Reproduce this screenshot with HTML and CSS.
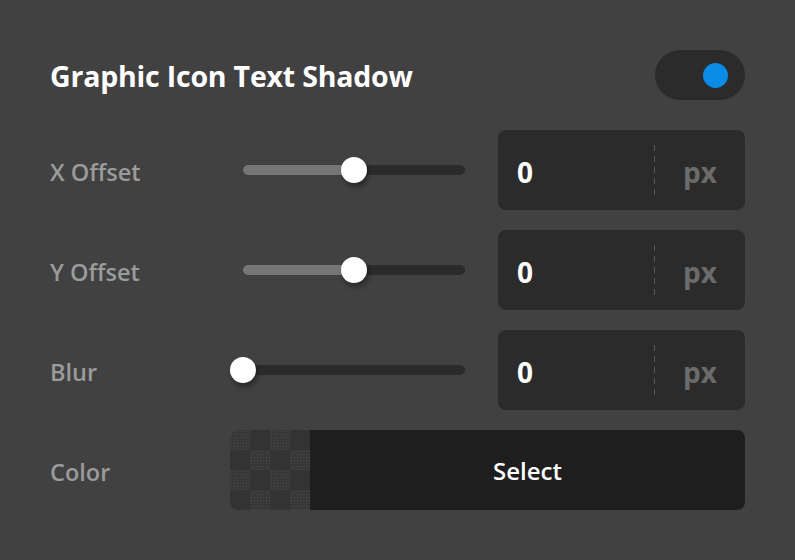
FILE: index.html
```html
<!DOCTYPE html>
<html lang="en">
<head>
<meta charset="utf-8">
<title>Graphic Icon Text Shadow</title>
<link rel="stylesheet" href="styles.css">
</head>
<body>
<div class="panel">
  <div class="header">
    <h1 class="title">Graphic Icon Text Shadow</h1>
    <div class="toggle"><span class="toggle-knob"></span></div>
  </div>

  <div class="row">
    <div class="label">X Offset</div>
    <div class="slider">
      <div class="track"><div class="fill" style="width:50%"></div><span class="knob" style="left:50%"></span></div>
    </div>
    <div class="field"><span class="value">0</span><span class="divider"></span><span class="unit">px</span></div>
  </div>

  <div class="row">
    <div class="label">Y Offset</div>
    <div class="slider">
      <div class="track"><div class="fill" style="width:50%"></div><span class="knob" style="left:50%"></span></div>
    </div>
    <div class="field"><span class="value">0</span><span class="divider"></span><span class="unit">px</span></div>
  </div>

  <div class="row">
    <div class="label">Blur</div>
    <div class="slider">
      <div class="track"><div class="fill" style="width:0%"></div><span class="knob" style="left:0%"></span></div>
    </div>
    <div class="field"><span class="value">0</span><span class="divider"></span><span class="unit">px</span></div>
  </div>

  <div class="row">
    <div class="label">Color</div>
    <div class="color-picker">
      <div class="checker">
        <span class="sq n"></span><span class="sq d"></span><span class="sq n"></span><span class="sq d"></span>
        <span class="sq d"></span><span class="sq n"></span><span class="sq d"></span><span class="sq n"></span>
        <span class="sq n"></span><span class="sq d"></span><span class="sq n"></span><span class="sq d"></span>
        <span class="sq d"></span><span class="sq n"></span><span class="sq d"></span><span class="sq n"></span>
      </div>
      <div class="select">Select</div>
    </div>
  </div>
</div>
</body>
</html>
```

FILE: styles.css
```css
* { box-sizing: border-box; }
html, body {
  margin: 0;
  padding: 0;
  background: #414141;
}
body {
  font-family: "Open Sans", "Noto Sans", sans-serif;
  width: 795px;
  height: 560px;
  overflow: hidden;
}
.panel {
  padding: 50px 50px 0 50px;
  display: flex;
  flex-direction: column;
  gap: 20px;
}
.header {
  display: flex;
  align-items: center;
  justify-content: space-between;
  height: 50px;
  margin-bottom: 10px;
}
.title {
  margin: 0;
  font-size: 28.5px;
  font-weight: 700;
  color: #ffffff;
  line-height: 1;
  letter-spacing: -0.2px;
  position: relative;
  top: 1px;
}
.toggle {
  width: 90px;
  height: 50px;
  border-radius: 25px;
  background: #2b2b2b;
  display: flex;
  align-items: center;
  justify-content: flex-end;
  padding-right: 17px;
}
.toggle-knob {
  width: 25px;
  height: 25px;
  border-radius: 50%;
  background: #0a8be6;
}
.row {
  display: flex;
  align-items: center;
  height: 80px;
}
.label {
  width: 180px;
  font-size: 23.5px;
  color: #9b9b9b;
  font-weight: 600;
  position: relative;
  top: 2px;
}
.slider {
  width: 248px;
  padding: 0 13px;
  margin-right: 20px;
}
.track {
  position: relative;
  height: 10px;
  border-radius: 5px;
  background: #2b2b2b;
}
.fill {
  height: 10px;
  border-radius: 5px;
  background: #767676;
}
.knob {
  position: absolute;
  top: 50%;
  width: 26px;
  height: 26px;
  margin-left: -13px;
  margin-top: -13px;
  border-radius: 50%;
  background: #ffffff;
  box-shadow: 2px 4px 5px rgba(0, 0, 0, 0.35);
}
.field {
  width: 247px;
  height: 80px;
  border-radius: 8px;
  background: #2b2b2b;
  display: flex;
  align-items: center;
}
.value {
  flex: 1;
  padding-left: 19px;
  font-size: 28px;
  font-weight: 700;
  color: #ffffff;
  position: relative;
  top: 2px;
}
.divider {
  width: 1px;
  height: 50px;
  background: repeating-linear-gradient(to bottom, #595959 0 6px, transparent 6px 11px);
}
.unit {
  width: 90px;
  text-align: center;
  font-size: 28px;
  font-weight: 700;
  color: #6b6b6b;
  position: relative;
  top: 2px;
}
.color-picker {
  display: flex;
  width: 515px;
  height: 80px;
}
.checker {
  width: 80px;
  height: 80px;
  display: grid;
  grid-template-columns: repeat(4, 20px);
  grid-template-rows: repeat(4, 20px);
  border-radius: 8px 0 0 8px;
  overflow: hidden;
}
.sq.n {
  background-color: #383838;
  background-image: radial-gradient(#4a4a4a 0.6px, transparent 0.9px);
  background-size: 3px 3px;
}
.sq.d { background: #333333; }
.select {
  flex: 1;
  background: #1e1e1e;
  border-radius: 0 8px 8px 0;
  display: flex;
  align-items: center;
  justify-content: center;
  font-size: 24px;
  font-weight: 600;
  color: #ffffff;
}
```
